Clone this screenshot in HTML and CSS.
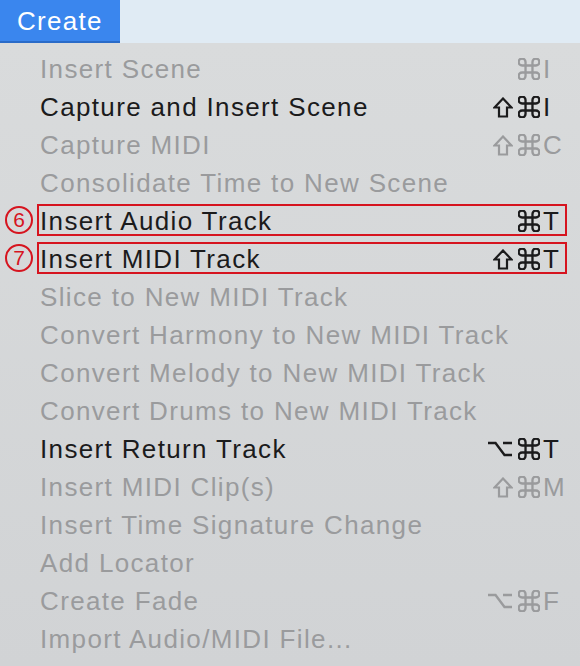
FILE: index.html
```html
<!DOCTYPE html>
<html>
<head>
<meta charset="utf-8">
<link rel="stylesheet" href="styles.css">
</head>
<body>
<svg class="defs" width="0" height="0" aria-hidden="true">
  <symbol id="cmd" viewBox="2.5 2.5 19 19"><path d="M15 6v12a3 3 0 1 0 3-3H6a3 3 0 1 0 3 3V6a3 3 0 1 0-3 3h12a3 3 0 1 0-3-3" fill="none" stroke="currentColor" stroke-width="2"/></symbol>
  <symbol id="shift" viewBox="0 0 20 21"><path d="M10 1.5L18.5 10.5H14V19.5H6V10.5H1.5Z" fill="none" stroke="currentColor" stroke-width="2.2" stroke-linejoin="miter"/></symbol>
  <symbol id="opt" viewBox="0 0 26 16"><path d="M1 2h7.5l9 12H25M16 2h9" fill="none" stroke="currentColor" stroke-width="2.4"/></symbol>
</svg>
<div class="menubar">
  <div class="menubar-item active">Create</div>
</div>
<div class="menu">
  <div class="row off"><span class="label">Insert Scene</span><span class="mods"><svg class="i-cmd"><use href="#cmd"/></svg></span><span class="key">I</span></div>
  <div class="row"><span class="label">Capture and Insert Scene</span><span class="mods"><svg class="i-shift"><use href="#shift"/></svg><svg class="i-cmd"><use href="#cmd"/></svg></span><span class="key">I</span></div>
  <div class="row off"><span class="label">Capture MIDI</span><span class="mods"><svg class="i-shift"><use href="#shift"/></svg><svg class="i-cmd"><use href="#cmd"/></svg></span><span class="key">C</span></div>
  <div class="row off"><span class="label">Consolidate Time to New Scene</span><span class="mods"></span><span class="key"></span></div>
  <div class="row marked"><span class="badge">6</span><span class="label">Insert Audio Track</span><span class="mods"><svg class="i-cmd"><use href="#cmd"/></svg></span><span class="key">T</span></div>
  <div class="row marked"><span class="badge">7</span><span class="label">Insert MIDI Track</span><span class="mods"><svg class="i-shift"><use href="#shift"/></svg><svg class="i-cmd"><use href="#cmd"/></svg></span><span class="key">T</span></div>
  <div class="row off"><span class="label">Slice to New MIDI Track</span><span class="mods"></span><span class="key"></span></div>
  <div class="row off"><span class="label">Convert Harmony to New MIDI Track</span><span class="mods"></span><span class="key"></span></div>
  <div class="row off"><span class="label">Convert Melody to New MIDI Track</span><span class="mods"></span><span class="key"></span></div>
  <div class="row off"><span class="label">Convert Drums to New MIDI Track</span><span class="mods"></span><span class="key"></span></div>
  <div class="row"><span class="label">Insert Return Track</span><span class="mods"><svg class="i-opt"><use href="#opt"/></svg><svg class="i-cmd"><use href="#cmd"/></svg></span><span class="key">T</span></div>
  <div class="row off"><span class="label">Insert MIDI Clip(s)</span><span class="mods"><svg class="i-shift"><use href="#shift"/></svg><svg class="i-cmd"><use href="#cmd"/></svg></span><span class="key">M</span></div>
  <div class="row off"><span class="label">Insert Time Signature Change</span><span class="mods"></span><span class="key"></span></div>
  <div class="row off"><span class="label">Add Locator</span><span class="mods"></span><span class="key"></span></div>
  <div class="row off"><span class="label">Create Fade</span><span class="mods"><svg class="i-opt"><use href="#opt"/></svg><svg class="i-cmd"><use href="#cmd"/></svg></span><span class="key">F</span></div>
  <div class="row off"><span class="label">Import Audio/MIDI File...</span><span class="mods"></span><span class="key"></span></div>
</div>
</body>
</html>
```
FILE: styles.css
```css
html, body {
  margin: 0;
  padding: 0;
}
body {
  width: 580px;
  height: 666px;
  overflow: hidden;
  font-family: "Liberation Sans", Arial, sans-serif;
  background: #d4d6d8;
}
.defs {
  position: absolute;
  width: 0;
  height: 0;
}
.menubar {
  height: 43px;
  background: #e0ebf4;
  display: flex;
}
.menubar-item {
  padding: 0 0 0 17px;
  font-size: 26px;
  letter-spacing: 1.3px;
  line-height: 43px;
  color: #ffffff;
}
.menubar-item.active {
  background: #3a86ee;
  box-shadow: inset 0 -2px 0 #2a6bc8;
  width: 103px;
}
.menu {
  padding: 7px 0 0 0;
  background: linear-gradient(180deg, #d9dbdc 0%, #d1d3d5 100%);
  height: 616px;
}
.row {
  position: relative;
  display: grid;
  grid-template-columns: 1fr auto 37px;
  align-items: center;
  height: 38px;
  padding-left: 40px;
  font-size: 26px;
  letter-spacing: 1.35px;
  color: #1b1b1c;
}
.row.off {
  color: #9a9b9d;
}
.label {
  white-space: nowrap;
}
.mods {
  display: flex;
  align-items: center;
  justify-content: flex-end;
  gap: 5px;
  padding-right: 3px;
}
.i-cmd {
  width: 22px;
  height: 22px;
}
.i-shift {
  width: 20px;
  height: 21px;
}
.i-opt {
  width: 26px;
  height: 16px;
}
.key {
  letter-spacing: 0;
}
.row.marked::before {
  content: "";
  position: absolute;
  left: 37px;
  right: 13px;
  top: 2px;
  bottom: 4px;
  border: 2px solid #d6141f;
}
.badge {
  position: absolute;
  left: 5px;
  top: 4px;
  width: 24px;
  height: 24px;
  border: 2px solid #d6141f;
  border-radius: 50%;
  font-size: 21px;
  line-height: 24px;
  text-align: center;
  letter-spacing: 0;
  color: #d6141f;
}
```
